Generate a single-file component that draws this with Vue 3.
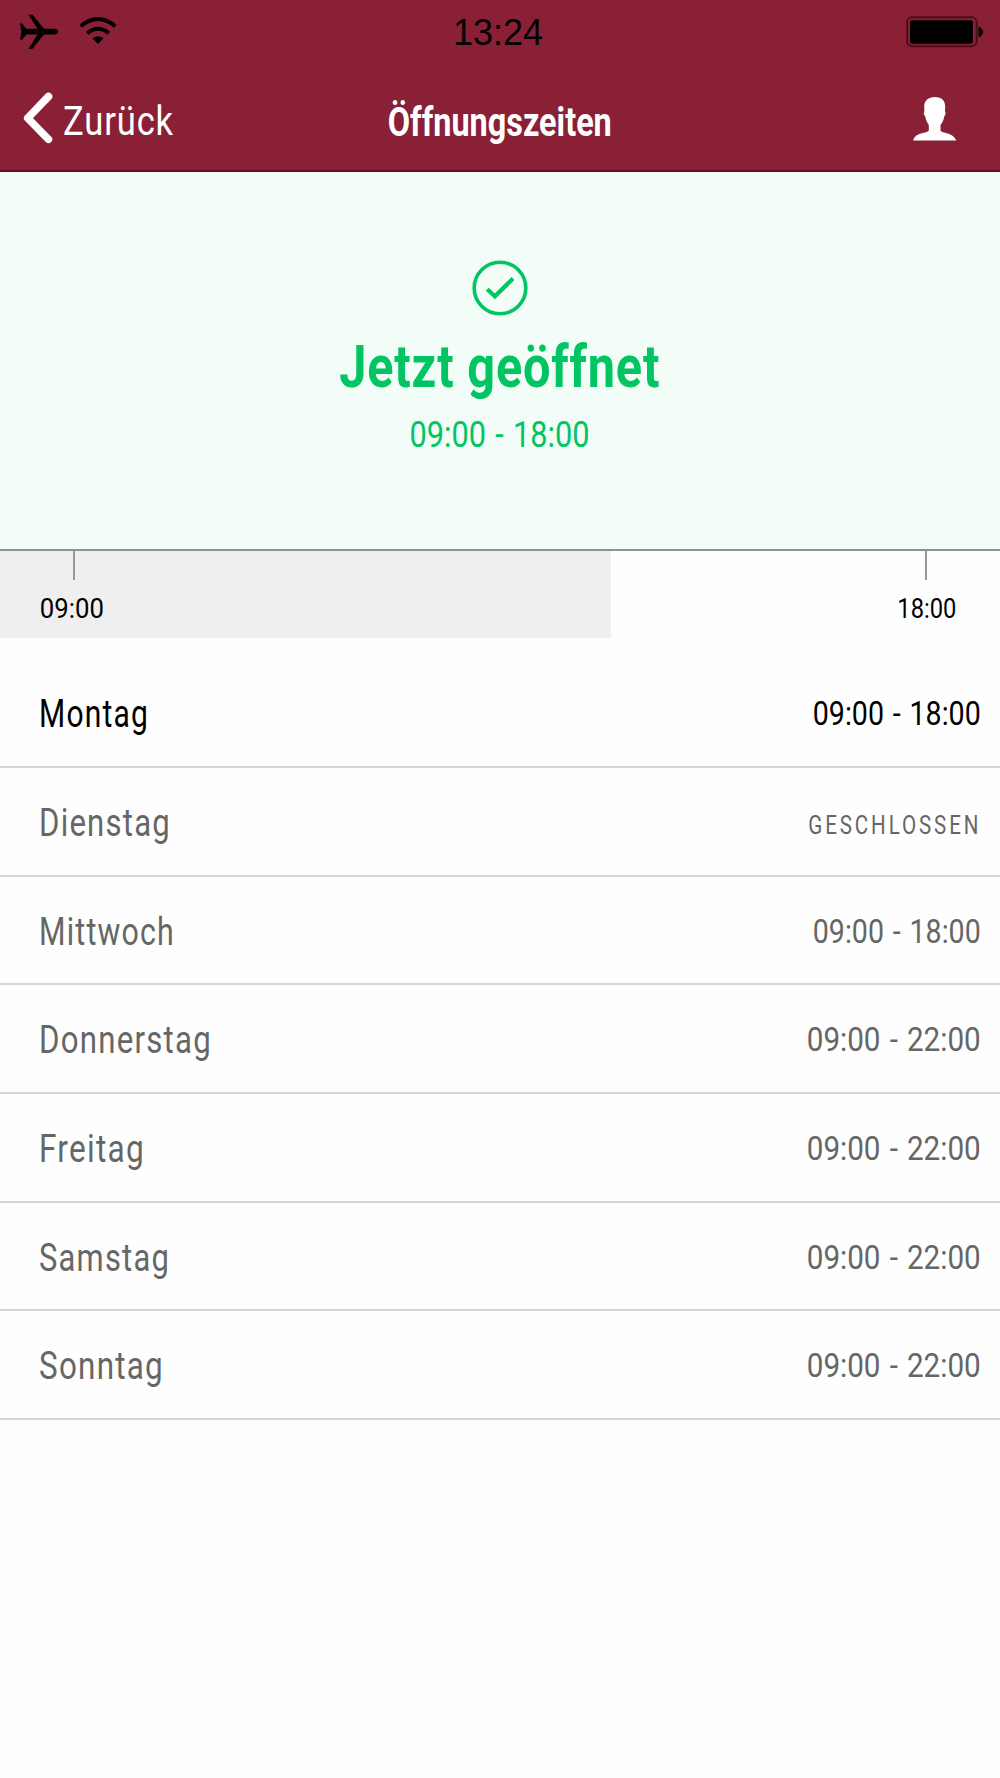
<script setup>
const days = [
  { name: 'Montag', hours: '09:00 - 18:00', nameWidth: 110, hoursWidth: 168, today: true },
  { name: 'Dienstag', hours: 'GESCHLOSSEN', nameWidth: 132, hoursWidth: 173, closed: true },
  { name: 'Mittwoch', hours: '09:00 - 18:00', nameWidth: 136, hoursWidth: 168 },
  { name: 'Donnerstag', hours: '09:00 - 22:00', nameWidth: 173, hoursWidth: 174 },
  { name: 'Freitag', hours: '09:00 - 22:00', nameWidth: 106, hoursWidth: 174 },
  { name: 'Samstag', hours: '09:00 - 22:00', nameWidth: 131, hoursWidth: 174 },
  { name: 'Sonntag', hours: '09:00 - 22:00', nameWidth: 125, hoursWidth: 174 },
]

// Condenses a label horizontally to the given width in pixels.
const vFit = {
  mounted(el, { value }) {
    el.style.transform = `scaleX(${value / el.getBoundingClientRect().width})`
  },
}
</script>

<template>
  <main class="screen">
    <header class="header">
      <div class="status">
        <div class="side">
          <svg class="plane" width="38" height="36" viewBox="0 0 38 36">
            <path d="M0 9.500h2.200l4 5.200h11.300L8.500.500h3.800L24 14.700h10.500c2.300 0 3.500 1.300 3.500 2.800s-1.200 2.900-3.500 2.900H24L12.300 35H8.500l9-14.600H6.200l-4 5.300H0l1.300-8.200z" />
          </svg>
          <svg class="wifi" width="38" height="28" viewBox="0 0 38 28">
            <path d="M1.800 9.200Q19-5.200 36.200 9.200M8.200 16.200Q19 7.400 29.800 16.200" fill="none" stroke="#000" stroke-width="4" />
            <path d="M13.500 21.300Q19 17.200 24.500 21.300L19 27z" />
          </svg>
        </div>
        <time class="clock">13:24</time>
        <div class="side end">
          <svg width="78" height="32" viewBox="0 0 78 32">
            <rect x="1.200" y="1.300" width="69.500" height="29" rx="5" fill="none" stroke="#4b0d1a" stroke-width="2" />
            <rect x="4" y="4.300" width="63" height="23.500" rx="2" />
            <path d="M72.500 10.500Q77 12.500 77 16t-4.500 5.500z" />
          </svg>
        </div>
      </div>
      <nav class="nav">
        <a class="back">
          <svg width="32" height="54" viewBox="0 0 32 54">
            <path d="M25.500 5.500 4.700 27.200 25.500 48.300" fill="none" stroke="#fff" stroke-width="7.600" stroke-linecap="round" stroke-linejoin="round" />
          </svg>
          <span v-fit="111" class="back-label">Zurück</span>
        </a>
        <h1 v-fit="224" class="title">Öffnungszeiten</h1>
        <svg class="person" width="44" height="44" viewBox="0 0 44 44">
          <path d="M22 0c6.500 0 10.300 3.700 10.200 9.500l-.2 5c1 .4.600 3.700-.7 4.800-.7 4-2 6.300-3.800 8.700v5.500c1.200 3 12.500 1.500 15.800 10H.2c2-8.500 14.200-7 15.600-10V28c-1.600-2.400-2.900-4.700-3.600-8.700-1.400-1.100-1.800-4.400-.8-4.800l-.2-5C11.200 3.700 15.400 0 22 0z" fill="#fff" />
        </svg>
      </nav>
    </header>

    <section class="now">
      <svg width="56" height="56" viewBox="0 0 56 56" fill="none" stroke="#03c463">
        <circle cx="28" cy="28" r="25.800" stroke-width="3.600" />
        <path d="M15.300 29.300 22.900 36.300 41 18.500" stroke-width="4.200" />
      </svg>
      <h2 v-fit="321" class="now-title">Jetzt geöffnet</h2>
      <p v-fit="180" class="now-hours">09:00 - 18:00</p>
    </section>

    <section class="timeline">
      <div class="elapsed"></div>
      <div class="marks">
        <div class="mark start"><i></i><span v-fit="64">09:00</span></div>
        <div class="mark finish"><i></i><span v-fit="59">18:00</span></div>
      </div>
    </section>

    <ul class="days">
      <li v-for="day in days" :key="day.name" class="day" :class="{ today: day.today }">
        <span v-fit="day.nameWidth" class="name">{{ day.name }}</span>
        <span v-fit="day.hoursWidth" class="hours" :class="{ closed: day.closed }">{{ day.hours }}</span>
      </li>
    </ul>
  </main>
</template>

<style>
body {
  margin: 0;
  background: #fefefe;
}
</style>

<style scoped>
.screen {
  width: 1000px;
  height: 1778px;
  overflow: hidden;
  background: #fefefe;
  font-family: Roboto, "Liberation Sans", sans-serif;
  color: #000;
}
h1, h2, p, ul {
  margin: 0;
  padding: 0;
}
.header {
  box-sizing: border-box;
  height: 172px;
  background: #892036;
  border-bottom: 2px solid #6b1022;
}
.status {
  display: flex;
  align-items: flex-start;
  justify-content: space-between;
  height: 64px;
  padding: 0 16px 0 20px;
}
.side {
  display: flex;
  flex: 1;
}
.end {
  justify-content: flex-end;
  padding-top: 16px;
}
.plane {
  margin-top: 14px;
}
.wifi {
  margin: 17px 0 0 21px;
}
.clock {
  padding: 12px 8px 0 0;
  font: 36px/42px "Liberation Sans", sans-serif;
}
.nav {
  display: grid;
  grid-template-columns: 1fr auto 1fr;
  align-items: center;
  height: 106px;
  padding: 2px 23px 0;
  box-sizing: border-box;
  color: #fff;
}
.back {
  display: flex;
  align-items: center;
  gap: 8px;
}
.back svg {
  flex: none;
}
.back-label {
  font-size: 40px;
  line-height: 50px;
  font-weight: 400;
  letter-spacing: 1px;
  transform-origin: left;
  margin-top: 7px;
}
.title {
  font-size: 41px;
  line-height: 50px;
  font-weight: 700;
  margin-top: 7px;
}
.person {
  justify-self: end;
  margin: 2px 20px 0 0;
}
.now {
  display: flex;
  flex-direction: column;
  align-items: center;
  box-sizing: border-box;
  height: 377px;
  padding-top: 88px;
  background: #f2fdf8;
  color: #03c463;
}
.now-title {
  margin-top: 15px;
  font-size: 59px;
  line-height: 72px;
  font-weight: 700;
  letter-spacing: 1px;
}
.now-hours {
  margin-top: 10px;
  font-size: 36px;
  line-height: 44px;
  font-weight: 400;
  word-spacing: 2px;
}
.timeline {
  display: grid;
  height: 87px;
  border-top: 2px solid #8f9199;
}
.elapsed,
.marks {
  grid-area: 1 / 1;
}
.elapsed {
  width: 611px;
  background: #efefef;
}
.marks {
  display: flex;
  justify-content: space-between;
  padding: 0 34px;
}
.mark {
  display: flex;
  flex-direction: column;
  align-items: center;
  width: 80px;
}
.mark i {
  width: 2px;
  height: 29px;
  background: #9496a1;
}
.mark span {
  margin-top: 13px;
  font-size: 28px;
  line-height: 32px;
}
.start span {
  margin-right: 4px;
}
.finish span {
  margin-left: 2px;
}
.days {
  padding-top: 21.300px;
  list-style: none;
}
.day {
  display: flex;
  align-items: center;
  justify-content: space-between;
  box-sizing: border-box;
  height: 108.700px;
  padding: 0 19px 0 39px;
  border-bottom: 2px solid #d4d4da;
  color: #666;
}
.today {
  color: #000;
}
.name {
  padding-top: 3px;
  font-size: 38px;
  letter-spacing: 1.500px;
  transform-origin: left;
}
.hours {
  padding-top: 2px;
  font-size: 33.500px;
  word-spacing: 2px;
  transform-origin: right;
}
.closed {
  padding-top: 8px;
  font-size: 25px;
  letter-spacing: 3.500px;
}
</style>
